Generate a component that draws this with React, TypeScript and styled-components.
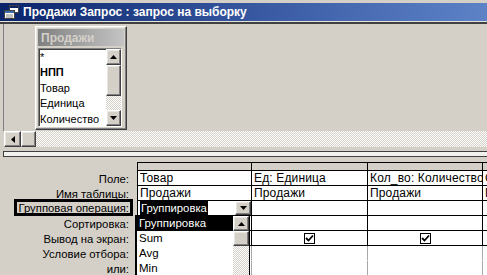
import React from 'react';
import styled, { createGlobalStyle, css } from 'styled-components';

const GlobalStyle = createGlobalStyle`
	html, body {
		margin: 0;
		padding: 0;
		background: #d4d0c8;
	}
	body {
		font-family: "Liberation Sans", Arial, sans-serif;
		font-size: 11px;
		color: #000;
	}
	* {
		box-sizing: border-box;
	}
`;

const checker = css`
	background-color: #d4d0c8;
	background-image: conic-gradient(#ffffff 25%, transparent 0 50%, #ffffff 0 75%, transparent 0);
	background-size: 2px 2px;
`;

const raised = css`
	background: #d4d0c8;
	border: 1px solid;
	border-color: #ffffff #404040 #404040 #ffffff;
	box-shadow: inset -1px -1px 0 #808080, inset 1px 1px 0 #e8e6e0;
`;

const Window = styled.div`
	width: 487px;
	height: 275px;
	overflow: hidden;
	display: flex;
	flex-direction: column;
	background: #d4d0c8;
	padding-top: 3px;
`;

const TitleBar = styled.div`
	flex: 0 0 18px;
	display: flex;
	align-items: center;
	gap: 4px;
	padding-left: 4px;
	background: linear-gradient(to right, #0a246a, #3a5ba4 55%, #5d82c6);
	color: #fff;
	font-weight: bold;
	font-size: 12px;
	white-space: nowrap;
`;

const TitleEdge = styled.div`
	flex: 0 0 3px;
	border-top: 1px solid #e4e2dc;
	border-bottom: 2px solid #404040;
`;

const UpperPane = styled.div`
	flex: 0 0 107px;
	margin-left: 3px;
	border-left: 1px solid #808080;
	padding: 2px 0 0 31px;
`;

const TableBox = styled.div`
	width: 92px;
	height: 104px;
	display: flex;
	flex-direction: column;
	gap: 2px;
	padding: 2px;
	${raised};
`;

const TableHeader = styled.div`
	flex: 0 0 17px;
	padding-left: 3px;
	display: flex;
	align-items: center;
	font-weight: bold;
	font-size: 12px;
	color: #d4d0c8;
	background: linear-gradient(to right, #808080, #c4c4c4);
`;

const FieldList = styled.div`
	flex: 1;
	display: flex;
	background: #fff;
	border: 1px solid;
	border-color: #808080 #ffffff #ffffff #808080;
	box-shadow: inset 1px 1px 0 #404040;
	overflow: hidden;
	margin-right: 2px;
`;

const Items = styled.div`
	flex: 1;
	padding: 1px 0 0 1px;
	overflow: hidden;
`;

const Item = styled.div<{ $bold?: boolean }>`
	height: 15.4px;
	line-height: 15px;
	font-size: 11px;
	white-space: nowrap;
	font-weight: ${(p) => (p.$bold ? 'bold' : 'normal')};
`;

const VScroll = styled.div<{ $thumb: number }>`
	flex: 0 0 15px;
	display: grid;
	grid-template-rows: 16px ${(p) => p.$thumb}px 1fr 16px;
`;

const HScroll = styled.div`
	flex: 0 0 16px;
	margin-left: 4px;
	display: grid;
	grid-template-columns: 17px 15px 1fr;
`;

const ArrowButton = styled.div`
	display: flex;
	align-items: center;
	justify-content: center;
	${raised};
`;

const Thumb = styled.div`
	${raised};
`;

const Track = styled.div`
	${checker};
`;

const Splitter = styled.div`
	flex: 0 0 6px;
	margin: 4px 0 0 3px;
	background: #f2f1ee;
	border: 1px solid #404040;
	border-right: none;
`;

const LowerPane = styled.div`
	flex: 1;
	padding-top: 5px;
`;

const Grid = styled.div`
	display: grid;
	grid-template-columns: 137px 114px 116px 115px 60px;
	grid-template-rows: 9px repeat(7, 15px);
`;

const Label = styled.div`
	display: flex;
	align-items: center;
	justify-content: flex-end;
	padding-right: 8px;
	font-size: 11.3px;
	white-space: nowrap;
`;

const ActiveLabel = styled.span`
	align-self: flex-start;
	margin: -2px -4px 0 0;
	height: 17px;
	display: flex;
	align-items: center;
	padding: 0 1px 0 1px;
	border: 3px solid #000;
`;

const HeaderCell = styled.div`
	background: #d4d0c8;
	border-top: 1px solid #000;
	border-bottom: 1px solid #000;
	border-left: 1px solid #000;
`;

const Cell = styled.div<{ $faint?: boolean }>`
	position: relative;
	background: #fff;
	border-left: 1px solid ${(p) => (p.$faint ? '#a8a8a8' : '#000')};
	border-bottom: 1px solid ${(p) => (p.$faint ? '#ffffff' : '#000')};
	padding-left: 2px;
	display: flex;
	align-items: center;
	font-size: 12px;
	white-space: nowrap;
	overflow: ${(p) => (p.$faint ? 'hidden' : 'visible')};
`;

const ClipCell = styled(Cell)`
	overflow: hidden;
	letter-spacing: 0.15px;
`;

const CheckCell = styled(Cell)`
	justify-content: center;
	padding-left: 0;
`;

const Selected = styled.span`
	background: #000;
	color: #fff;
	padding: 0 1px;
	line-height: 14px;
	font-size: 11.3px;
`;

const DropButton = styled(ArrowButton)`
	position: absolute;
	top: 0;
	right: 0;
	width: 16px;
	height: 14px;
`;

const DropList = styled.div`
	position: absolute;
	top: 100%;
	left: -3px;
	width: 115px;
	height: 64px;
	z-index: 2;
	display: flex;
	background: #fff;
	border: 1px solid #000;
	border-left-width: 2px;
`;

const DropItems = styled.div`
	flex: 1;
`;

const DropItem = styled.div<{ $active?: boolean }>`
	height: 15px;
	line-height: 15px;
	padding-left: 2px;
	font-size: 11.5px;
	background: ${(p) => (p.$active ? '#000' : 'transparent')};
	color: ${(p) => (p.$active ? '#fff' : '#000')};
`;

const DropScroll = styled.div`
	flex: 0 0 16px;
	display: grid;
	grid-template-rows: 15px 15px 1fr;
`;

const CheckBox = styled.div`
	width: 11px;
	height: 11px;
	border: 1px solid #000;
	background: #fff;
	display: flex;
	align-items: center;
	justify-content: center;
`;

type Dir = 'up' | 'down' | 'left';

function Arrow({ dir }: { dir: Dir }) {
	const points = {
		up: '0,4 7,4 3.5,0',
		down: '0,0 7,0 3.5,4',
		left: '4,0 4,7 0,3.5',
	}[dir];
	const size = dir === 'left' ? { w: 4, h: 7 } : { w: 7, h: 4 };
	return (
		<svg width={size.w} height={size.h} viewBox={`0 0 ${size.w} ${size.h}`}>
			<polygon points={points} fill='#000' />
		</svg>
	);
}

function QueryIcon() {
	return (
		<svg width='15' height='14' viewBox='0 0 15 14'>
			<rect x='5.5' y='0.5' width='9' height='7' fill='#fff' stroke='#404040' />
			<rect x='6' y='1' width='8' height='2' fill='#0a246a' />
			<rect x='0.5' y='5.5' width='10' height='8' fill='#fff' stroke='#404040' />
			<rect x='1' y='6' width='9' height='2' fill='#3a6ea5' />
			<line x1='2' y1='10' x2='9' y2='10' stroke='#808080' />
			<line x1='2' y1='12' x2='9' y2='12' stroke='#808080' />
		</svg>
	);
}

function Check() {
	return (
		<svg width='9' height='9' viewBox='0 0 9 9'>
			<polyline points='1,4 3.5,6.5 8,1.5' fill='none' stroke='#000' strokeWidth='1.8' />
		</svg>
	);
}

const fields = ['*', 'НПП', 'Товар', 'Единица', 'Количество'];

const columns = [
	{ field: 'Товар', table: 'Продажи', show: true },
	{ field: 'Ед: Единица', table: 'Продажи', show: true },
	{ field: 'Кол_во: Количество', table: 'Продажи', show: true },
	{ field: 'Сумма: Сумма', table: 'Продажи', show: true },
];

const labels = ['Поле:', 'Имя таблицы:', 'Групповая операция:', 'Сортировка:', 'Вывод на экран:', 'Условие отбора:', 'или:'];

const totals = ['Группировка', 'Sum', 'Avg', 'Min'];

export default function App() {
	return (
		<>
			<GlobalStyle />
			<Window>
				<TitleBar>
					<QueryIcon />
					Продажи Запрос : запрос на выборку
				</TitleBar>
				<TitleEdge />
				<UpperPane>
					<TableBox>
						<TableHeader>Продажи</TableHeader>
						<FieldList>
							<Items>
								{fields.map((f) => (
									<Item key={f} $bold={f === 'НПП'}>
										{f}
									</Item>
								))}
							</Items>
							<VScroll $thumb={31}>
								<ArrowButton>
									<Arrow dir='up' />
								</ArrowButton>
								<Thumb />
								<Track />
								<ArrowButton>
									<Arrow dir='down' />
								</ArrowButton>
							</VScroll>
						</FieldList>
					</TableBox>
				</UpperPane>
				<HScroll>
					<ArrowButton>
						<Arrow dir='left' />
					</ArrowButton>
					<Thumb />
					<Track />
				</HScroll>
				<Splitter />
				<LowerPane>
					<Grid>
						<div />
						{columns.map((c) => (
							<HeaderCell key={c.field} />
						))}

						<Label>{labels[0]}</Label>
						{columns.map((c) => (
							<ClipCell key={c.field}>{c.field}</ClipCell>
						))}

						<Label>{labels[1]}</Label>
						{columns.map((c) => (
							<ClipCell key={c.field}>{c.table}</ClipCell>
						))}

						<Label>
							<ActiveLabel>{labels[2]}</ActiveLabel>
						</Label>
						<Cell>
							<Selected>Группировка</Selected>
							<DropButton>
								<Arrow dir='down' />
							</DropButton>
							<DropList>
								<DropItems>
									{totals.map((t, i) => (
										<DropItem key={t} $active={i === 0}>
											{t}
										</DropItem>
									))}
								</DropItems>
								<DropScroll>
									<ArrowButton>
										<Arrow dir='up' />
									</ArrowButton>
									<Thumb />
									<Track />
								</DropScroll>
							</DropList>
						</Cell>
						<Cell />
						<Cell />
						<Cell />

						<Label>{labels[3]}</Label>
						<Cell />
						<Cell />
						<Cell />
						<Cell />

						<Label>{labels[4]}</Label>
						{columns.map((c) => (
							<CheckCell key={c.field}>
								{c.show && (
									<CheckBox>
										<Check />
									</CheckBox>
								)}
							</CheckCell>
						))}

						<Label>{labels[5]}</Label>
						<Cell $faint />
						<Cell $faint />
						<Cell $faint />
						<Cell $faint />

						<Label>{labels[6]}</Label>
						<Cell $faint />
						<Cell $faint />
						<Cell $faint />
						<Cell $faint />
					</Grid>
				</LowerPane>
			</Window>
		</>
	);
}
